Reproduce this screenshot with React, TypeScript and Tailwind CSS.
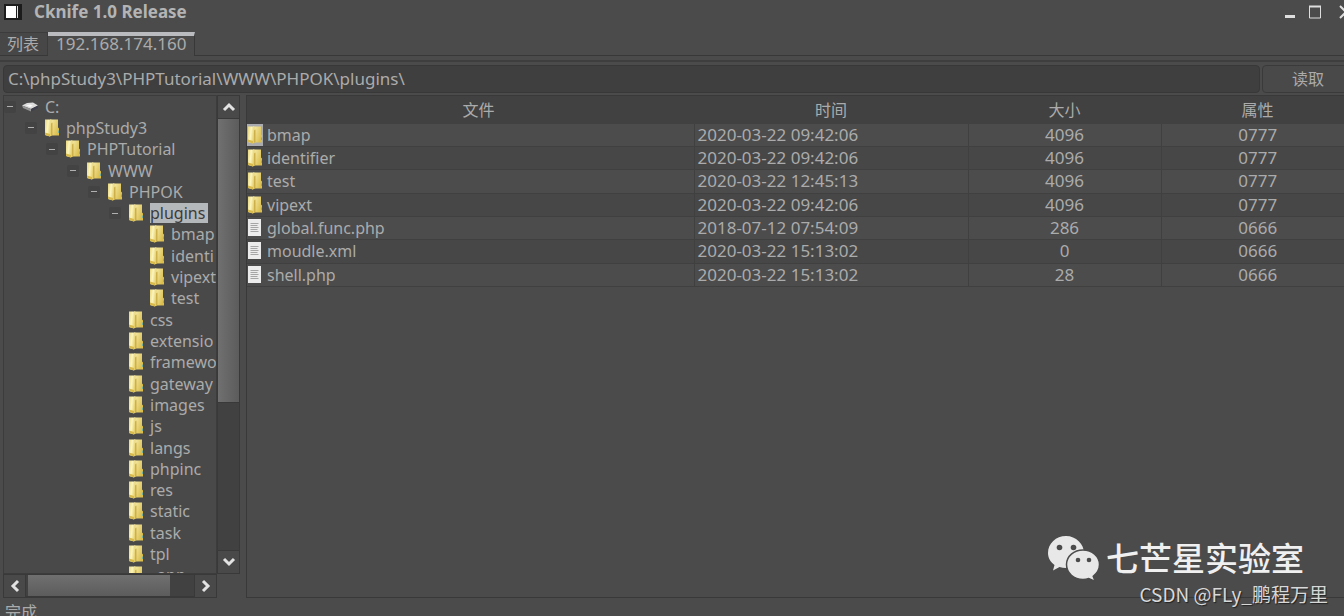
import React from "react";

const tree = [
  { name: "C:", level: 0, open: true, drive: true },
  { name: "phpStudy3", level: 1, open: true },
  { name: "PHPTutorial", level: 2, open: true },
  { name: "WWW", level: 3, open: true },
  { name: "PHPOK", level: 4, open: true },
  { name: "plugins", level: 5, open: true, selected: true },
  { name: "bmap", level: 6 },
  { name: "identi", level: 6 },
  { name: "vipext", level: 6 },
  { name: "test", level: 6 },
  { name: "css", level: 5 },
  { name: "extensio", level: 5 },
  { name: "framewo", level: 5 },
  { name: "gateway", level: 5 },
  { name: "images", level: 5 },
  { name: "js", level: 5 },
  { name: "langs", level: 5 },
  { name: "phpinc", level: 5 },
  { name: "res", level: 5 },
  { name: "static", level: 5 },
  { name: "task", level: 5 },
  { name: "tpl", level: 5 },
  { name: "_app", level: 5 },
];

const files = [
  { name: "bmap", time: "2020-03-22 09:42:06", size: "4096", attr: "0777", dir: true },
  { name: "identifier", time: "2020-03-22 09:42:06", size: "4096", attr: "0777", dir: true },
  { name: "test", time: "2020-03-22 12:45:13", size: "4096", attr: "0777", dir: true },
  { name: "vipext", time: "2020-03-22 09:42:06", size: "4096", attr: "0777", dir: true },
  { name: "global.func.php", time: "2018-07-12 07:54:09", size: "286", attr: "0666" },
  { name: "moudle.xml", time: "2020-03-22 15:13:02", size: "0", attr: "0666" },
  { name: "shell.php", time: "2020-03-22 15:13:02", size: "28", attr: "0666" },
];

function FolderIcon() {
  return (
    <svg width="16" height="18" viewBox="0 0 16 18" className="shrink-0">
      <defs>
        <linearGradient id="folder-left" x1="0" x2="1" y1="0" y2="0.3">
          <stop offset="0" stopColor="#e9d678" />
          <stop offset="0.5" stopColor="#fbf5c0" />
          <stop offset="1" stopColor="#e6cf6a" />
        </linearGradient>
        <linearGradient id="folder-right" x1="0" x2="1" y1="0" y2="0.6">
          <stop offset="0" stopColor="#f7efb0" />
          <stop offset="1" stopColor="#dabd4c" />
        </linearGradient>
      </defs>
      <path d="M6 0.500h8v8l1 1V16.500H6z" fill="url(#folder-right)" />
      <path d="M1 0.500h6.500v16l-1.500 1-5-1.500z" fill="url(#folder-left)" />
      <path d="M7 4.500 8.500 3.500v12L7 17z" fill="#cdb04a" />
      <path d="M1 13.500 6 15v2.500L1 16z" fill="#d8bb4c" />
      <path d="M14 11.500h1v2.500h-1z" fill="#76b0a0" />
    </svg>
  );
}

function FileIcon() {
  return (
    <svg width="16" height="18" viewBox="0 0 16 18" className="shrink-0">
      <path d="M1 0h13v17H1z" fill="#ececec" />
      <path d="M3.500 4.500h8M3.500 6.500h7M3.500 8.500h8M3.500 10.500h7M3.500 12.500h8" stroke="#a6a6a6" />
    </svg>
  );
}

function DriveIcon() {
  return (
    <svg width="18" height="18" viewBox="0 0 18 18" className="shrink-0">
      <path d="M1 7.500 6 5l6-.5L17 7.500l-7 3.500z" fill="#dcdcdc" />
      <path d="M1 7.500l9 3.500V13.500l-8-3.500z" fill="#969696" />
      <path d="M10 11 17 7.500v2.500L10 13.500z" fill="#3e3e4c" />
      <path d="M5 7.500l4-1 3 1.200-3 1.300z" fill="#fafafa" />
    </svg>
  );
}

function Chevron({ d }: { d: string }) {
  return (
    <svg width="14" height="14" viewBox="0 0 14 14" fill="none" stroke="#e2e2e2" strokeWidth="3">
      <path d={d} />
    </svg>
  );
}

const scrollButton = "flex h-6 w-[23px] shrink-0 items-center justify-center border border-[#393939] bg-[#494949]";

export default function App() {
  return (
    <div className="relative h-screen overflow-hidden bg-[#4b4b4b] font-['Noto_Sans','Noto_Sans_CJK_SC',sans-serif] text-[16px] leading-5 text-[#ababab]">
      <div className="-mr-[10px] flex h-full flex-col">
        <header className="flex h-8 items-start justify-between pl-1">
          <div className="flex h-6 items-center gap-3">
            <svg width="18" height="16" viewBox="0 0 18 16">
              <path d="M0 0h18v16H0z" fill="#1c1c1c" />
              <path d="M2 2h10v12H2z" fill="#fff" />
              <path d="M13.500 2v12" stroke="#e0e0e0" />
            </svg>
            <h1 className="text-[17px] font-bold text-[#b4b4b4]">Cknife 1.0 Release</h1>
          </div>
          <div className="flex h-6 items-center gap-3 text-[#dedede]">
            <button aria-label="Minimize">
              <svg width="12" height="14" viewBox="0 0 12 14"><path d="M1 11.500h10" stroke="currentColor" strokeWidth="3" /></svg>
            </button>
            <button aria-label="Maximize">
              <svg width="14" height="14" viewBox="0 0 14 14" fill="none" stroke="currentColor"><path d="M1 1.500h12" strokeWidth="2" /><path d="M1.500 1v12h11V1" /></svg>
            </button>
            <button aria-label="Close" className="pl-1">
              <svg width="16" height="14" viewBox="0 0 16 14" fill="none" stroke="currentColor" strokeWidth="2"><path d="M2 1l12 12M14 1 2 13" /></svg>
            </button>
          </div>
        </header>

        <nav className="flex h-6 items-stretch border-b border-[#383838]">
          <button className="border-t border-r border-[#3c3c3c] bg-[#474747] pr-2 pl-[7px]">列表</button>
          <button className="-mb-px border-t-4 border-r border-t-[#b9bbbf] border-r-[#383838] bg-[#4b4b4b] px-2 pb-1 text-[17px] leading-4">192.168.174.160</button>
        </nav>

        <form className="mt-1 flex h-[35px] gap-[2px] border-t-2 border-[#3e3e3e] pt-[3px] pb-[2px] pl-[3px]" onSubmit={(e) => e.preventDefault()}>
          <input
            aria-label="Path"
            className="min-w-0 flex-1 rounded-sm border border-[#383838] bg-[#3f3f3f] px-1 text-[17px] outline-none"
            defaultValue={"C:\\phpStudy3\\PHPTutorial\\WWW\\PHPOK\\plugins\\"}
          />
          <button className="w-[92px] rounded-sm border border-[#3a3a3a] bg-[#494949]">读取</button>
        </form>

        <main className="flex min-h-0 flex-1 gap-[6px] pl-[3px]">
          <aside className="grid w-[237px] shrink-0 grid-cols-[1fr_23px] grid-rows-[1fr_24px]">
            <div className="min-h-0 overflow-hidden border border-[#3c3c3c] bg-[#494949]">
              <ul className="grid h-[490px] auto-rows-fr">
                {tree.map((node) => (
                  <li key={node.name + node.level} className="flex items-center whitespace-nowrap" style={{ paddingLeft: node.level * 21 }}>
                    {node.open ? (
                      <button aria-label={"Collapse " + node.name} className="flex size-3 shrink-0 items-center justify-center rounded-xs bg-[#434343]">
                        <span className="h-px w-[6px] bg-[#b0b0b0]" />
                      </button>
                    ) : (
                      <span className="w-3 shrink-0" />
                    )}
                    <span className="flex w-[29px] shrink-0 justify-end pr-[6px]">
                      {node.drive ? <DriveIcon /> : <FolderIcon />}
                    </span>
                    <span className={node.selected ? "bg-[#b4b8bb] pr-[3px] text-[#3c3c3c]" : ""}>{node.name}</span>
                  </li>
                ))}
              </ul>
            </div>
            <div className="flex flex-col bg-[#414141]">
              <button aria-label="Scroll up" className={scrollButton}><Chevron d="M2 10 7 5l5 5" /></button>
              <div className="flex-1 border-x border-[#393939]">
                <div className="h-[284px] border-b border-[#393939] bg-linear-to-r from-[#707070] to-[#5c5c5c]" />
              </div>
              <button aria-label="Scroll down" className={scrollButton}><Chevron d="M2 4l5 5 5-5" /></button>
            </div>
            <div className="flex border-b border-[#393939] bg-[#414141]">
              <button aria-label="Scroll left" className={scrollButton}><Chevron d="M10 2 5 7l5 5" /></button>
              <div className="flex-1 border-y border-[#393939] pl-[2px]">
                <div className="h-full w-[142px] bg-linear-to-b from-[#707070] to-[#5c5c5c]" />
              </div>
              <button aria-label="Scroll right" className={scrollButton}><Chevron d="M4 2l5 5-5 5" /></button>
            </div>
          </aside>

          <section className="min-w-0 flex-1 border-b border-l border-[#393939]">
            <table className="h-[192px] w-full table-fixed border-collapse">
              <colgroup>
                <col className="w-4" />
                <col />
                <col className="w-[274px]" />
                <col className="w-[193px]" />
                <col className="w-[193px]" />
              </colgroup>
              <thead>
                <tr className="h-7 border-t border-[#393939] bg-[#414141]">
                  <td className="p-0" />
                  <th className="p-0 font-normal">文件</th>
                  <th className="p-0 font-normal">时间</th>
                  <th className="p-0 font-normal">大小</th>
                  <th className="p-0 font-normal">属性</th>
                </tr>
              </thead>
              <tbody>
                {files.map((file, i) => (
                  <tr key={file.name} className="border-b border-[#404040] odd:bg-[#4c4c4c] even:bg-[#474747]">
                    <td className={i === 0 ? "bg-[#a9abae] p-0" : "p-0"}>
                      <div className="flex">{file.dir ? <FolderIcon /> : <FileIcon />}</div>
                    </td>
                    <td className="border-r border-[#404040] p-0 pl-1">{file.name}</td>
                    <td className="border-r border-[#404040] p-0 pl-[3px] text-[17px]">{file.time}</td>
                    <td className="border-r border-[#404040] p-0 text-center text-[17px]">{file.size}</td>
                    <td className="p-0 text-center text-[17px]">{file.attr}</td>
                  </tr>
                ))}
              </tbody>
            </table>
          </section>
        </main>

        <footer className="h-[18px] overflow-hidden px-[5px] pt-1">完成</footer>
      </div>

      <div className="absolute right-4 bottom-[10px] flex flex-col items-end text-[#e8e8e8]">
        <div className="flex items-center gap-[6px] pr-6">
          <svg width="52" height="46" viewBox="0 0 52 46" fill="#e8e8e8">
            <path d="M18 0C8 0 0 7.500 0 17c0 5 2.500 9 6.500 12L5 34.500l6.500-3.500c2 .7 4.300 1 6.500 1 10 0 18-6 18-15S28 0 18 0z" />
            <path d="M35 14c-9 0-16.500 6-16.500 14.500S26 43.500 35 43.500c2 0 4-.3 5.800-1l6.400 3-2-5.200C48.700 37.500 51.500 33.500 51.500 28.500 51.500 20 44 14 35 14z" stroke="#4b4b4b" strokeWidth="1.500" />
            <g fill="#4b4b4b">
              <circle cx="11.500" cy="11.500" r="2.800" />
              <circle cx="25.500" cy="11.500" r="2.800" />
              <circle cx="30" cy="24" r="2.300" />
              <circle cx="41" cy="24" r="2.300" />
            </g>
          </svg>
          <span className="text-[33px] leading-10 font-medium text-[#f0f0f0]">七芒星实验室</span>
        </div>
        <span className="font-['Noto_Sans_CJK_SC',sans-serif] text-[19px] leading-6 text-[#d8d8d8] [text-shadow:1px_1px_1px_#222]">CSDN @FLy_鹏程万里</span>
      </div>
    </div>
  );
}
